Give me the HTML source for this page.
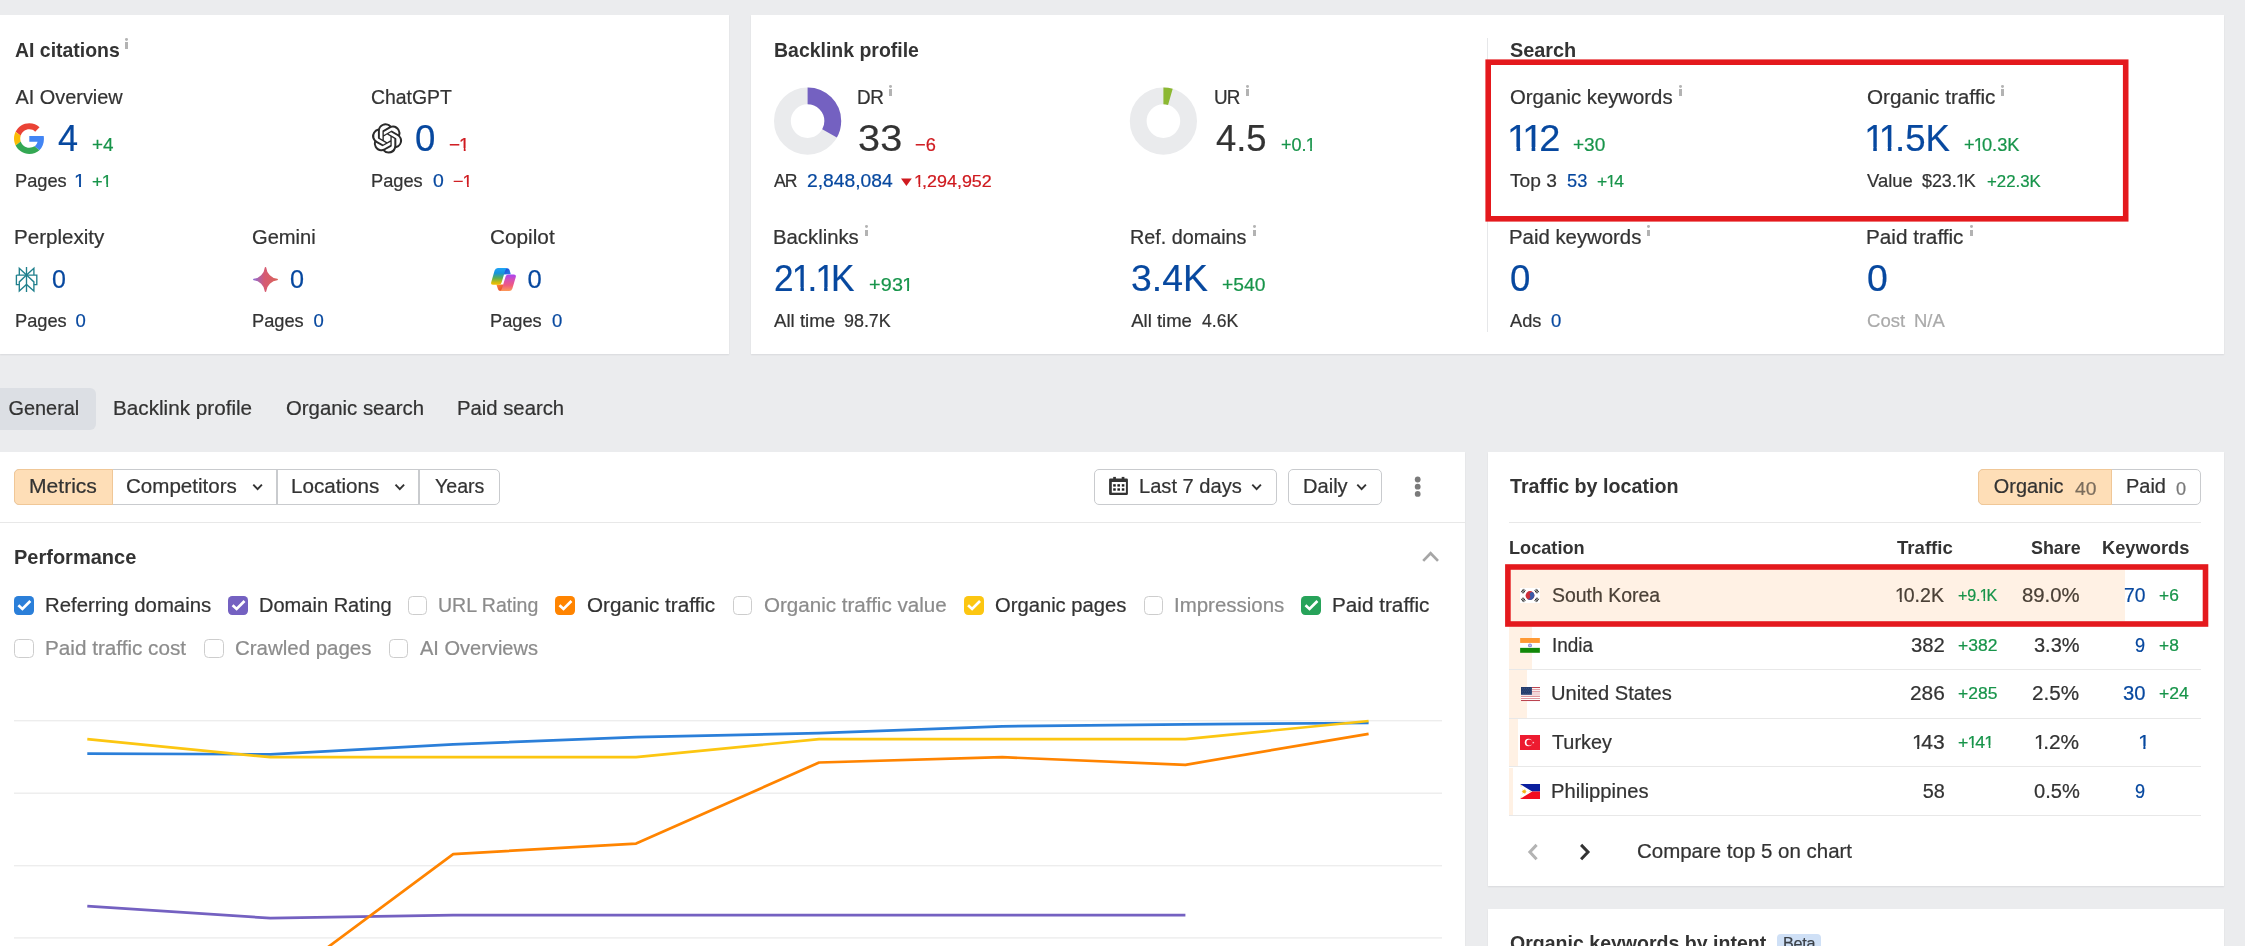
<!DOCTYPE html>
<html lang="en"><head><meta charset="utf-8"><title>Site Explorer overview</title>
<style>
html,body{margin:0;padding:0}
html{background:#ebecee}
body{width:2245px;height:946px;overflow:hidden;background:#ebecee;position:relative;font-family:"Liberation Sans",sans-serif;color:#333}
.abs,.t,.card,.cb,.ub,.ii,.hl,.sep,.bar,.redbox,.btn{position:absolute;box-sizing:border-box}
.t{line-height:1;white-space:nowrap;transform-origin:0 0;-webkit-text-stroke:0.22px currentColor}
.o{display:inline-block;margin-left:-0.05em;margin-right:-0.11em}
.o1{clip-path:polygon(0 -5px,100% -5px,100% 13px,0.345em 13px,0.345em 21px,0.248em 21px,0.248em 13px,0 13px)}
.o2{clip-path:polygon(0 -5px,100% -5px,100% 12px,0.345em 12px,0.345em 20px,0.248em 20px,0.248em 12px,0 12px)}
.o3{clip-path:polygon(0 -5px,100% -5px,100% 11px,0.345em 11px,0.345em 19px,0.248em 19px,0.248em 11px,0 11px)}
.o4{clip-path:polygon(0 -5px,100% -5px,100% 27px,0.345em 27px,0.345em 36px,0.248em 36px,0.248em 27px,0 27px)}
.o5{clip-path:polygon(0 -5px,100% -5px,100% 18px,0.345em 18px,0.345em 26px,0.248em 26px,0.248em 18px,0 18px)}
.card{background:#fff;box-shadow:0 1px 1.5px rgba(20,25,35,.085)}
.redbox{border:5.6px solid #e4191d}
.cb{width:20px;height:19.2px;border-radius:4.2px}
.ub{width:19.6px;height:19.2px;border-radius:4.5px;border:1.3px solid #cdcdcd;background:#fff;margin-left:-0.3px;margin-top:-0.2px}
.ii{width:2.9px;height:6.9px;background:#b3b3b3}
.ii:before{content:"";position:absolute;left:-0.1px;top:-4.15px;width:3.1px;height:3px;border-radius:50%;background:#b3b3b3}
.sep{height:1.2px;background:#e8e8e8}
.bar{background:#fff1e4}
.btn{border:1.3px solid #c9cbce;border-radius:5px;background:#fff}
svg{position:absolute;overflow:visible}
</style></head><body>

<!-- ===== top cards ===== -->
<div class="card" style="left:0;top:15px;width:729px;height:338.6px"></div>
<div class="card" style="left:751px;top:15px;width:1473px;height:338.6px"></div>
<div class="abs" style="left:1486.7px;top:38px;width:1.2px;height:294px;background:#e6e7e9"></div>

<!-- info icons -->
<div class="ii" style="left:125.3px;top:42.2px"></div>
<div class="ii" style="left:889.1px;top:89.1px"></div>
<div class="ii" style="left:1246.3px;top:89.1px"></div>
<div class="ii" style="left:1679.1px;top:89.1px"></div>
<div class="ii" style="left:2001.1px;top:89.1px"></div>
<div class="ii" style="left:865.1px;top:229.5px"></div>
<div class="ii" style="left:1253.3px;top:229.5px"></div>
<div class="ii" style="left:1647.1px;top:229.5px"></div>
<div class="ii" style="left:1970.2px;top:229.5px"></div>

<!--ICONS-->

<!-- ===== tabs ===== -->
<div class="abs" style="left:0;top:388px;width:96px;height:41.6px;background:#dcdfe4;border-radius:0 6px 6px 0"></div>

<!-- ===== chart card ===== -->
<div class="card" style="left:0;top:451.6px;width:1465px;height:520px"></div>
<div class="btn" style="left:14.2px;top:468.9px;width:485.5px;height:35.8px"></div>
<div class="abs" style="left:14.2px;top:468.9px;width:99px;height:35.8px;background:#fedeb7;border:1.3px solid #f0c797;border-radius:5px 0 0 5px"></div>
<div class="abs" style="left:276.3px;top:469px;width:1.3px;height:35.6px;background:#c9cbce"></div>
<div class="abs" style="left:418.4px;top:469px;width:1.3px;height:35.6px;background:#c9cbce"></div>
<div class="btn" style="left:1094.2px;top:468.9px;width:182.7px;height:35.8px"></div>
<div class="btn" style="left:1288px;top:468.9px;width:93.6px;height:35.8px"></div>
<div class="sep" style="left:0;top:522px;width:1465px"></div>

<!-- checkboxes row 1 -->
<div class="cb" style="left:14.2px;top:595.9px;background:#2b7fd9"></div>
<div class="cb" style="left:228.2px;top:595.9px;background:#7461c1"></div>
<div class="ub" style="left:408px;top:596.2px"></div>
<div class="cb" style="left:555.2px;top:595.9px;background:#ff8400"></div>
<div class="ub" style="left:733.2px;top:596.2px"></div>
<div class="cb" style="left:963.7px;top:595.9px;background:#fcc611"></div>
<div class="ub" style="left:1144px;top:596.2px"></div>
<div class="cb" style="left:1301.2px;top:595.9px;background:#27a35a"></div>
<!-- row 2 -->
<div class="ub" style="left:14.4px;top:639.2px"></div>
<div class="ub" style="left:204.5px;top:639.2px"></div>
<div class="ub" style="left:389px;top:639.2px"></div>

<!-- ===== right card ===== -->
<div class="card" style="left:1488px;top:451.6px;width:736px;height:434.4px"></div>
<div class="btn" style="left:1978.1px;top:468.9px;width:222.8px;height:35.8px"></div>
<div class="abs" style="left:1978.1px;top:468.9px;width:134px;height:35.8px;background:#fedeb7;border:1.3px solid #f0c797;border-radius:5px 0 0 5px"></div>
<div class="sep" style="left:1509.2px;top:522px;width:691.6px"></div>

<!-- rows -->
<div class="bar" style="left:1510px;top:570px;width:614.8px;height:51.2px"></div>
<div class="bar" style="left:1509.2px;top:627px;width:22.6px;height:42.2px"></div>
<div class="bar" style="left:1509.2px;top:670.2px;width:17.4px;height:47.8px"></div>
<div class="bar" style="left:1509.2px;top:719.2px;width:8.7px;height:47px"></div>
<div class="bar" style="left:1509.2px;top:767.5px;width:3.8px;height:47.2px"></div>
<div class="sep" style="left:1509.2px;top:669px;width:691.6px"></div>
<div class="sep" style="left:1509.2px;top:718px;width:691.6px"></div>
<div class="sep" style="left:1509.2px;top:766.3px;width:691.6px"></div>
<div class="sep" style="left:1509.2px;top:814.7px;width:691.6px"></div>

<!-- next card -->
<div class="card" style="left:1488px;top:908.8px;width:736px;height:80px"></div>
<div class="abs" style="left:1777.2px;top:934.3px;width:43.8px;height:30px;background:#cfe0f6;border-radius:4px"></div>

<svg style="left:13.8px;top:122.8px" width="30.6" height="31.2" viewBox="0 0 48 48">
<path fill="#EA4335" d="M24 9.5c3.54 0 6.71 1.22 9.21 3.6l6.85-6.85C35.9 2.38 30.47 0 24 0 14.62 0 6.51 5.38 2.56 13.22l7.98 6.19C12.43 13.72 17.74 9.5 24 9.5z"/>
<path fill="#4285F4" d="M46.98 24.55c0-1.57-.15-3.09-.38-4.55H24v9.02h12.94c-.58 2.96-2.26 5.48-4.78 7.18l7.73 6c4.51-4.18 7.09-10.36 7.09-17.65z"/>
<path fill="#FBBC05" d="M10.53 28.59c-.48-1.45-.76-2.99-.76-4.59s.27-3.14.76-4.59l-7.98-6.19C.92 16.46 0 20.12 0 24c0 3.88.92 7.54 2.56 10.78l7.97-6.19z"/>
<path fill="#34A853" d="M24 48c6.48 0 11.93-2.13 15.89-5.81l-7.73-6c-2.15 1.45-4.92 2.3-8.16 2.3-6.26 0-11.57-4.22-13.47-9.91l-7.98 6.19C6.51 42.62 14.62 48 24 48z"/>
</svg>
<svg style="left:371.9px;top:122.9px" width="30.2" height="30.8" viewBox="0 0 24 24"><path fill="#2b2b2b" d="M22.2819 9.8211a5.9847 5.9847 0 0 0-.5157-4.9108 6.0462 6.0462 0 0 0-6.5098-2.9A6.0651 6.0651 0 0 0 4.9807 4.1818a5.9847 5.9847 0 0 0-3.9977 2.9 6.0462 6.0462 0 0 0 .7427 7.0966 5.98 5.98 0 0 0 .511 4.9107 6.051 6.051 0 0 0 6.5146 2.9001A5.9847 5.9847 0 0 0 13.2599 24a6.0557 6.0557 0 0 0 5.7718-4.2058 5.9894 5.9894 0 0 0 3.9977-2.9001 6.0557 6.0557 0 0 0-.7475-7.0729zm-9.022 12.6081a4.4755 4.4755 0 0 1-2.8764-1.0408l.1419-.0804 4.7783-2.7582a.7948.7948 0 0 0 .3927-.6813v-6.7369l2.02 1.1686a.071.071 0 0 1 .038.052v5.5826a4.504 4.504 0 0 1-4.4945 4.4944zm-9.6607-4.1254a4.4708 4.4708 0 0 1-.5346-3.0137l.142.0852 4.783 2.7582a.7712.7712 0 0 0 .7806 0l5.8428-3.3685v2.3324a.0804.0804 0 0 1-.0332.0615L9.74 19.9502a4.4992 4.4992 0 0 1-6.1408-1.6464zM2.3408 7.8956a4.485 4.485 0 0 1 2.3655-1.9728V11.6a.7664.7664 0 0 0 .3879.6765l5.8144 3.3543-2.0201 1.1685a.0757.0757 0 0 1-.071 0l-4.8303-2.7865A4.504 4.504 0 0 1 2.3408 7.872zm16.5963 3.8558L13.1038 8.364 15.1192 7.2a.0757.0757 0 0 1 .071 0l4.8303 2.7913a4.4944 4.4944 0 0 1-.6765 8.1042v-5.6772a.79.79 0 0 0-.407-.667zm2.0107-3.0231l-.142-.0852-4.7735-2.7818a.7759.7759 0 0 0-.7854 0L9.409 9.2297V6.8974a.0662.0662 0 0 1 .0284-.0615l4.8303-2.7866a4.4992 4.4992 0 0 1 6.6802 4.66zM8.3065 12.863l-2.02-1.1638a.0804.0804 0 0 1-.038-.0567V6.0742a4.4992 4.4992 0 0 1 7.3757-3.4537l-.142.0805L8.704 5.459a.7948.7948 0 0 0-.3927.6813zm1.0976-2.3654l2.602-1.4998 2.6069 1.4998v2.9994l-2.5974 1.4997-2.6067-1.4997Z"/></svg>
<svg style="left:0;top:0" width="2245" height="946"><g fill="none" stroke="#20808d" stroke-width="1.35" stroke-linejoin="miter">
<path d="M26.5 267V292"/>
<path d="M16.4 275.1H36.8V284.6H33.9"/>
<path d="M16.4 275.1V284.6H19.3"/>
<path d="M19.3 275.1V268.3L26.5 275.1L33.9 268.3V275.1"/>
<path d="M26.5 275.1L19.3 281.9V291L26.5 284.4L33.9 291V281.9L26.5 275.1"/>
</g></svg>
<svg style="left:253px;top:267px" width="25" height="25" viewBox="0 0 25 25"><defs><linearGradient id="gm" x1="0" y1="0" x2="1" y2="0"><stop offset="0" stop-color="#8f6ad0"/><stop offset="0.45" stop-color="#d65a72"/><stop offset="1" stop-color="#d9635a"/></linearGradient></defs>
<path fill="url(#gm)" stroke="url(#gm)" stroke-width="1.5" stroke-linejoin="round" d="M12.5 0.8C12.9 6.6 18.4 12.1 24.2 12.5C18.4 12.9 12.9 18.4 12.5 24.2C12.1 18.4 6.6 12.9 0.8 12.5C6.6 12.1 12.1 6.6 12.5 0.8Z"/></svg>
<svg style="left:491px;top:267.8px" width="25" height="23.2" viewBox="0 0 25 23.2"><defs>
<linearGradient id="c1" x1="0" y1="0" x2="0" y2="1"><stop offset="0" stop-color="#1fa4f5"/><stop offset="0.3" stop-color="#1593dd"/><stop offset="0.6" stop-color="#5cae52"/><stop offset="0.85" stop-color="#cdbb10"/><stop offset="1" stop-color="#f7bf00"/></linearGradient>
<linearGradient id="c2" x1="0" y1="0" x2="0" y2="1"><stop offset="0" stop-color="#a843f5"/><stop offset="0.35" stop-color="#d851b0"/><stop offset="0.65" stop-color="#f05a80"/><stop offset="1" stop-color="#fc9a55"/></linearGradient>
<linearGradient id="c3" x1="0" y1="0" x2="1" y2="1"><stop offset="0" stop-color="#ff8a3a"/><stop offset="1" stop-color="#e23a2a"/></linearGradient>
<linearGradient id="c4" x1="0" y1="0" x2="1" y2="1"><stop offset="0" stop-color="#1b3fd8"/><stop offset="1" stop-color="#2a86e8"/></linearGradient></defs>
<path fill="url(#c4)" d="M13.5 0.3H16.2Q18 0.3 18.6 2.2L19.8 6.2L12.3 6.6Z"/>
<path fill="url(#c3)" d="M5.4 16.6H12.7L11.2 23H9.3Q7.5 23 7 21.2Z"/>
<path fill="url(#c1)" d="M6.8 0.1H16.4Q14.9 0.6 14.2 2.6L10.6 14.6Q9.9 16.8 7.7 16.8H2Q-0.4 16.8 0.2 14.3L3.6 2.6Q4.4 0.1 6.8 0.1Z"/>
<path fill="url(#c2)" d="M18.2 23.1H8.7Q10.3 22.6 11 20.6L14.6 8.6Q15.3 6.4 17.5 6.4H23Q25.4 6.4 24.8 8.9L21.4 20.6Q20.6 23.1 18.2 23.1Z"/>
</svg>
<svg style="left:0;top:0" width="2245" height="946">
<rect x="1488.2" y="62.2" width="637.5" height="156.6" fill="none" stroke="#e4191d" stroke-width="5.6"/>
<rect x="1507.9" y="567" width="697.6" height="57" fill="none" stroke="#e4191d" stroke-width="5.6"/>
<circle cx="807.6" cy="121.1" r="25.2" fill="none" stroke="#eaebed" stroke-width="16.8"/>
<circle cx="807.6" cy="121.1" r="25.2" fill="none" stroke="#7461c1" stroke-width="16.8" stroke-dasharray="52.25 158.34" transform="rotate(-90 807.6 121.1)"/>
<circle cx="1163.4" cy="121.1" r="25.2" fill="none" stroke="#eaebed" stroke-width="16.8"/>
<circle cx="1163.4" cy="121.1" r="25.2" fill="none" stroke="#8cb832" stroke-width="16.8" stroke-dasharray="7.13 158.34" transform="rotate(-90 1163.4 121.1)"/>
<path d="M901 178.4H911.8L906.4 185.9Z" fill="#cf1a1f"/>
<path d="M253.3 484.6L257.6 489.2L261.9 484.6" fill="none" stroke="#333" stroke-width="1.9"/>
<path d="M395.5 484.6L399.8 489.2L404.1 484.6" fill="none" stroke="#333" stroke-width="1.9"/>
<path d="M1252.3 484.6L1256.6 489.2L1260.9 484.6" fill="none" stroke="#333" stroke-width="1.9"/>
<path d="M1357.3 484.6L1361.6 489.2L1365.9 484.6" fill="none" stroke="#333" stroke-width="1.9"/>
<path d="M1423.2 560.9L1430.6 553.3L1438 560.9" fill="none" stroke="#a6a6a6" stroke-width="2.7"/>
<circle cx="1417.7" cy="479.5" r="2.9" fill="#7a7a7a"/>
<circle cx="1417.7" cy="486.7" r="2.9" fill="#7a7a7a"/>
<circle cx="1417.7" cy="493.9" r="2.9" fill="#7a7a7a"/>
<g fill="#333"><rect x="1109.1" y="478.5" width="18.8" height="16.5" rx="1.2"/><rect x="1113.2" y="476.9" width="2.7" height="3"/><rect x="1121.7" y="476.9" width="2.7" height="3"/></g>
<rect x="1111.8" y="482" width="14.1" height="10.7" fill="#fff"/>
<rect x="1113.2" y="484.2" width="2.55" height="2.4" fill="#222"/>
<rect x="1113.2" y="488.3" width="2.55" height="2.4" fill="#222"/>
<rect x="1117.4" y="484.2" width="2.55" height="2.4" fill="#222"/>
<rect x="1117.4" y="488.3" width="2.55" height="2.4" fill="#222"/>
<rect x="1121.8" y="484.2" width="2.55" height="2.4" fill="#222"/>
<rect x="1121.8" y="488.3" width="2.55" height="2.4" fill="#222"/>
<path d="M18.38 605.32L22.40 609.00L30.33 600.97" fill="none" stroke="#fff" stroke-width="2.7"/>
<path d="M232.58 605.32L236.60 609.00L244.53 600.97" fill="none" stroke="#fff" stroke-width="2.7"/>
<path d="M559.48 605.32L563.50 609.00L571.43 600.97" fill="none" stroke="#fff" stroke-width="2.7"/>
<path d="M968.08 605.32L972.10 609.00L980.03 600.97" fill="none" stroke="#fff" stroke-width="2.7"/>
<path d="M1305.48 605.32L1309.50 609.00L1317.43 600.97" fill="none" stroke="#fff" stroke-width="2.7"/>
<path d="M1536.6 844.9L1529.9 852L1536.6 859.2" fill="none" stroke="#b3b3b3" stroke-width="3"/>
<path d="M1581.1 844.9L1588 852L1581.1 859.2" fill="none" stroke="#333" stroke-width="3"/>
<rect x="14" y="720.0" width="1428" height="1.4" fill="#ededed"/>
<rect x="14" y="792.5" width="1428" height="1.4" fill="#ededed"/>
<rect x="14" y="865.0" width="1428" height="1.4" fill="#ededed"/>
<rect x="14" y="937.2" width="1428" height="1.4" fill="#ededed"/>
<polyline points="87.3,906.2 270.3,918.1 453.2,915.1 636.1,915.1 819.1,915.1 1002.3,915.1 1185.4,915.1" fill="none" stroke="#7461c1" stroke-width="2.7" stroke-linejoin="round"/>
<polyline points="87.3,1010.0 270.3,990.0 453.2,854.1 636.1,843.6 819.1,762.5 1002.3,757.2 1185.4,764.8 1368.6,733.8" fill="none" stroke="#ff8400" stroke-width="2.7" stroke-linejoin="round"/>
<polyline points="87.3,753.6 270.3,754.3 453.2,744.4 636.1,737.1 819.1,733.2 1002.3,726.3 1185.4,724.3 1368.6,723.0" fill="none" stroke="#2b7fd9" stroke-width="2.7" stroke-linejoin="round"/>
<polyline points="87.3,739.1 270.3,757.2 453.2,757.2 636.1,757.2 819.1,739.1 1002.3,739.1 1185.4,739.1 1368.6,721.0" fill="none" stroke="#fcc611" stroke-width="2.7" stroke-linejoin="round"/>
</svg>
<svg style="left:1520px;top:588.1px" width="20" height="15" viewBox="0 0 20 15"><rect width="20" height="15" fill="#fff"/>
<circle cx="10" cy="7.5" r="4.4" fill="#cd2e3a"/><g transform="translate(10 7.5) rotate(-33.7)"><path d="M-4.4 0A4.4 4.4 0 0 0 4.4 0A2.2 2.2 0 0 0 0 0A2.2 2.2 0 0 1 -4.4 0Z" fill="#3a5aa8"/></g>
<g stroke="#1a1a1a" stroke-width="0.9"><path d="M1.2 4.1L3.6 0.9M2.1 4.8L4.5 1.6M3 5.5L5.4 2.3M14.6 2.3L17 5.5M15.5 1.6L17.9 4.8M16.4 0.9L18.8 4.1M1.2 10.9L3.6 14.1M2.1 10.2L4.5 13.4M3 9.5L5.4 12.7M14.6 12.7L17 9.5M15.5 13.4L17.9 10.2M16.4 14.1L18.8 10.9"/></g></svg>
<svg style="left:1520px;top:638.1px" width="20" height="14.8" viewBox="0 0 20 15"><rect width="20" height="15" fill="#fff"/><rect width="20" height="5" fill="#ff9933"/><rect y="10" width="20" height="5" fill="#128807"/><circle cx="10" cy="7.5" r="2" fill="#8a8ad6"/><circle cx="10" cy="7.5" r="0.9" fill="#c9c9ee"/></svg>
<svg style="left:1521px;top:686.9px" width="19" height="14.2" viewBox="0 0 19 14.2"><rect width="19" height="14.2" fill="#fff"/><rect x="10.9" y="5.4" width="8.1" height="3.2" fill="#f1d5d7"/><rect x="0" y="7.8" width="19" height="0.8" fill="#f1d5d7"/><rect x="10.9" y="0.1" width="8.1" height="0.95" fill="#b5323f"/><rect x="10.9" y="2.2" width="8.1" height="0.95" fill="#dc8f96"/><rect x="10.9" y="4.2" width="8.1" height="0.95" fill="#dc8f96"/><rect x="0" y="9.0" width="19" height="0.95" fill="#dc8f96"/><rect x="0" y="11.1" width="19" height="0.95" fill="#dc8f96"/><rect x="0" y="13.1" width="19" height="0.95" fill="#b5323f"/><rect width="10.9" height="7.8" fill="#213a6b"/><g fill="#5a6d96"><rect x="0.9" y="0.9" width="0.7" height="0.7"/><rect x="2.9" y="0.9" width="0.7" height="0.7"/><rect x="4.9" y="0.9" width="0.7" height="0.7"/><rect x="6.9" y="0.9" width="0.7" height="0.7"/><rect x="8.9" y="0.9" width="0.7" height="0.7"/><rect x="1.8" y="2.7" width="0.7" height="0.7"/><rect x="3.8" y="2.7" width="0.7" height="0.7"/><rect x="5.8" y="2.7" width="0.7" height="0.7"/><rect x="7.8" y="2.7" width="0.7" height="0.7"/><rect x="9.8" y="2.7" width="0.7" height="0.7"/><rect x="0.9" y="4.5" width="0.7" height="0.7"/><rect x="2.9" y="4.5" width="0.7" height="0.7"/><rect x="4.9" y="4.5" width="0.7" height="0.7"/><rect x="6.9" y="4.5" width="0.7" height="0.7"/><rect x="8.9" y="4.5" width="0.7" height="0.7"/><rect x="1.8" y="6.3" width="0.7" height="0.7"/><rect x="3.8" y="6.3" width="0.7" height="0.7"/><rect x="5.8" y="6.3" width="0.7" height="0.7"/><rect x="7.8" y="6.3" width="0.7" height="0.7"/><rect x="9.8" y="6.3" width="0.7" height="0.7"/></g></svg>
<svg style="left:1520px;top:735px" width="20" height="15" viewBox="0 0 20 15"><rect width="20" height="15" fill="#ed1b30"/><circle cx="8.5" cy="7.6" r="3.75" fill="#fff"/><circle cx="9.45" cy="7.6" r="3" fill="#ed1b30"/><path d="M14.6 7.6L12.5 8.3L13.8 6.5V8.7L12.5 6.9Z" fill="#fff"/></svg>
<svg style="left:1520px;top:784px" width="20" height="15" viewBox="0 0 20 15"><rect width="20" height="7.5" fill="#0b1f9e"/><rect y="7.5" width="20" height="7.5" fill="#f20d1e"/><path d="M0 0L12.2 7.5L0 15Z" fill="#fff"/><circle cx="4.2" cy="7.5" r="1.5" fill="#f2b416"/><path d="M5.42 7.05L6.90 7.50L5.42 7.95Z" fill="#f2b416"/><path d="M5.38 8.05L6.11 9.41L4.75 8.68Z" fill="#f2b416"/><path d="M4.65 8.72L4.20 10.20L3.75 8.72Z" fill="#f2b416"/><path d="M3.65 8.68L2.29 9.41L3.02 8.05Z" fill="#f2b416"/><path d="M2.98 7.95L1.50 7.50L2.98 7.05Z" fill="#f2b416"/><path d="M3.02 6.95L2.29 5.59L3.65 6.32Z" fill="#f2b416"/><path d="M3.75 6.28L4.20 4.80L4.65 6.28Z" fill="#f2b416"/><path d="M4.75 6.32L6.11 5.59L5.38 6.95Z" fill="#f2b416"/><circle cx="1.1" cy="1.9" r="0.55" fill="#f2c84a"/><circle cx="1.1" cy="13.1" r="0.55" fill="#f2c84a"/><circle cx="10" cy="7.5" r="0.55" fill="#f2c84a"/></svg>

<div class="abs" style="left:0;top:0;width:2245px;height:946px;will-change:transform">
<span class="t" style="left:15.00px;top:41px;font-size:19.9px;color:#333333;font-weight:700;-webkit-text-stroke:0;transform:scaleX(0.9772);">AI citations</span>
<span class="t" style="left:15.50px;top:88px;font-size:19.9px;color:#333333;">AI Overview</span>
<span class="t" style="left:58.40px;top:120px;font-size:37.0px;color:#07489f;transform:scaleX(0.9750);">4</span>
<span class="t" style="left:92.30px;top:136px;font-size:18.5px;color:#17944a;transform:scaleX(1.0190);">+4</span>
<span class="t" style="left:14.51px;top:172px;font-size:18.5px;color:#333333;transform:scaleX(0.9862);">Pages</span>
<span class="t" style="left:75.38px;top:172px;font-size:18.5px;color:#07489f;transform:scaleX(1.1000);"><span class="o o2">1</span></span>
<span class="t" style="left:91.80px;top:173px;font-size:17.05px;color:#17944a;letter-spacing:0.073px;transform:scaleX(1.0700);">+<span class="o o3">1</span></span>
<span class="t" style="left:371.22px;top:88px;font-size:19.9px;color:#333333;transform:scaleX(0.9761);">ChatGPT</span>
<span class="t" style="left:414.71px;top:120px;font-size:37.0px;color:#07489f;transform:scaleX(0.9895);">0</span>
<span class="t" style="left:449.30px;top:136px;font-size:18.5px;color:#cf1a1f;transform:scaleX(1.0205);">−<span class="o o2">1</span></span>
<span class="t" style="left:371.21px;top:172px;font-size:18.5px;color:#333333;transform:scaleX(0.9862);">Pages</span>
<span class="t" style="left:432.80px;top:172px;font-size:18.5px;color:#07489f;transform:scaleX(1.0500);">0</span>
<span class="t" style="left:452.90px;top:173px;font-size:17.05px;color:#cf1a1f;transform:scaleX(1.0551);">−<span class="o o3">1</span></span>
<span class="t" style="left:14.47px;top:228px;font-size:19.9px;color:#333333;transform:scaleX(1.0337);">Perplexity</span>
<span class="t" style="left:51.52px;top:267px;font-size:25.6px;color:#07489f;transform:scaleX(0.9769);">0</span>
<span class="t" style="left:14.51px;top:312px;font-size:18.5px;color:#333333;transform:scaleX(0.9862);">Pages</span>
<span class="t" style="left:75.60px;top:312px;font-size:18.5px;color:#07489f;">0</span>
<span class="t" style="left:252.19px;top:228px;font-size:19.9px;color:#333333;transform:scaleX(1.0116);">Gemini</span>
<span class="t" style="left:289.52px;top:267px;font-size:25.6px;color:#07489f;transform:scaleX(0.9846);">0</span>
<span class="t" style="left:252.21px;top:312px;font-size:18.5px;color:#333333;transform:scaleX(0.9862);">Pages</span>
<span class="t" style="left:313.50px;top:312px;font-size:18.5px;color:#07489f;">0</span>
<span class="t" style="left:489.86px;top:228px;font-size:19.9px;color:#333333;transform:scaleX(1.0442);">Copilot</span>
<span class="t" style="left:527.40px;top:267px;font-size:25.6px;color:#07489f;">0</span>
<span class="t" style="left:490.01px;top:312px;font-size:18.5px;color:#333333;transform:scaleX(0.9862);">Pages</span>
<span class="t" style="left:552.00px;top:312px;font-size:18.5px;color:#07489f;">0</span>
<span class="t" style="left:773.52px;top:41px;font-size:19.9px;color:#333333;font-weight:700;-webkit-text-stroke:0;transform:scaleX(0.9785);">Backlink profile</span>
<span class="t" style="left:857.05px;top:88px;font-size:19.9px;color:#333333;letter-spacing:-0.522px;transform:scaleX(0.9500);">DR</span>
<span class="t" style="left:857.73px;top:120px;font-size:37.0px;color:#333333;letter-spacing:0.207px;transform:scaleX(1.0700);">33</span>
<span class="t" style="left:914.90px;top:136px;font-size:18.5px;color:#cf1a1f;transform:scaleX(0.9854);">−6</span>
<span class="t" style="left:774.00px;top:172px;font-size:18.5px;color:#333333;letter-spacing:-1.129px;transform:scaleX(0.9500);">AR</span>
<span class="t" style="left:806.60px;top:172px;font-size:18.5px;color:#07489f;transform:scaleX(1.0413);">2,848,084</span>
<span class="t" style="left:914.77px;top:173px;font-size:17.05px;color:#cf1a1f;transform:scaleX(1.0504);"><span class="o o3">1</span>,294,952</span>
<span class="t" style="left:1214.35px;top:88px;font-size:19.9px;color:#333333;letter-spacing:-0.838px;transform:scaleX(0.9500);">UR</span>
<span class="t" style="left:1216.00px;top:120px;font-size:37.0px;color:#333333;transform:scaleX(0.9831);">4.5</span>
<span class="t" style="left:1280.90px;top:136px;font-size:18.5px;color:#17944a;transform:scaleX(0.9748);">+0.<span class="o o2">1</span></span>
<span class="t" style="left:772.98px;top:228px;font-size:19.9px;color:#333333;transform:scaleX(1.0209);">Backlinks</span>
<span class="t" style="left:774.05px;top:260px;font-size:37.0px;color:#07489f;letter-spacing:-0.043px;transform:scaleX(0.9500);">2<span class="o o4">1</span>.<span class="o o4">1</span>K</span>
<span class="t" style="left:868.80px;top:276px;font-size:18.5px;color:#17944a;letter-spacing:0.181px;transform:scaleX(1.0700);">+93<span class="o o2">1</span></span>
<span class="t" style="left:774.00px;top:312px;font-size:18.5px;color:#333333;transform:scaleX(1.0089);">All time</span>
<span class="t" style="left:844.40px;top:312px;font-size:18.5px;color:#333333;transform:scaleX(0.9672);">98.7K</span>
<span class="t" style="left:1130.21px;top:228px;font-size:19.9px;color:#333333;transform:scaleX(0.9936);">Ref. domains</span>
<span class="t" style="left:1130.69px;top:260px;font-size:37.0px;color:#07489f;transform:scaleX(1.0088);">3.4K</span>
<span class="t" style="left:1222.30px;top:276px;font-size:18.5px;color:#17944a;transform:scaleX(1.0415);">+540</span>
<span class="t" style="left:1131.20px;top:312px;font-size:18.5px;color:#333333;">All time</span>
<span class="t" style="left:1201.60px;top:312px;font-size:18.5px;color:#333333;transform:scaleX(0.9531);">4.6K</span>
<span class="t" style="left:1509.90px;top:41px;font-size:19.9px;color:#333333;font-weight:700;-webkit-text-stroke:0;">Search</span>
<span class="t" style="left:1509.90px;top:88px;font-size:19.9px;color:#333333;transform:scaleX(1.0211);">Organic keywords</span>
<span class="t" style="left:1508.64px;top:120px;font-size:37.0px;color:#07489f;transform:scaleX(1.0278);"><span class="o o4">1</span><span class="o o4">1</span>2</span>
<span class="t" style="left:1573.20px;top:136px;font-size:18.5px;color:#17944a;transform:scaleX(1.0292);">+30</span>
<span class="t" style="left:1509.90px;top:172px;font-size:18.5px;color:#333333;transform:scaleX(1.0363);">Top 3</span>
<span class="t" style="left:1566.50px;top:172px;font-size:18.5px;color:#07489f;transform:scaleX(0.9858);">53</span>
<span class="t" style="left:1597.00px;top:173px;font-size:17.05px;color:#17944a;transform:scaleX(1.0276);">+<span class="o o3">1</span>4</span>
<span class="t" style="left:1867.10px;top:88px;font-size:19.9px;color:#333333;transform:scaleX(1.0405);">Organic traffic</span>
<span class="t" style="left:1865.91px;top:120px;font-size:37.0px;color:#07489f;transform:scaleX(0.9897);"><span class="o o4">1</span><span class="o o4">1</span>.5K</span>
<span class="t" style="left:1963.90px;top:136px;font-size:18.5px;color:#17944a;transform:scaleX(0.9868);">+<span class="o o2">1</span>0.3K</span>
<span class="t" style="left:1867.10px;top:172px;font-size:18.5px;color:#333333;transform:scaleX(0.9944);">Value</span>
<span class="t" style="left:1922.00px;top:172px;font-size:18.5px;color:#333333;transform:scaleX(0.9656);">$23.<span class="o o2">1</span>K</span>
<span class="t" style="left:1986.80px;top:173px;font-size:17.05px;color:#17944a;transform:scaleX(0.9874);">+22.3K</span>
<span class="t" style="left:1508.88px;top:228px;font-size:19.9px;color:#333333;transform:scaleX(1.0233);">Paid keywords</span>
<span class="t" style="left:1510.01px;top:260px;font-size:37.0px;color:#07489f;transform:scaleX(0.9895);">0</span>
<span class="t" style="left:1509.90px;top:312px;font-size:18.5px;color:#333333;transform:scaleX(0.9833);">Ads</span>
<span class="t" style="left:1551.00px;top:312px;font-size:18.5px;color:#07489f;">0</span>
<span class="t" style="left:1866.06px;top:228px;font-size:19.9px;color:#333333;transform:scaleX(1.0414);">Paid traffic</span>
<span class="t" style="left:1867.29px;top:260px;font-size:37.0px;color:#07489f;transform:scaleX(1.0105);">0</span>
<span class="t" style="left:1867.10px;top:312px;font-size:18.5px;color:#aaaaaa;">Cost</span>
<span class="t" style="left:1913.50px;top:312px;font-size:18.5px;color:#aaaaaa;transform:scaleX(0.9967);">N/A</span>
<span class="t" style="left:8.50px;top:399px;font-size:19.9px;color:#333333;">General</span>
<span class="t" style="left:112.96px;top:399px;font-size:19.9px;color:#333333;transform:scaleX(1.0399);">Backlink profile</span>
<span class="t" style="left:286.40px;top:399px;font-size:19.9px;color:#333333;transform:scaleX(1.0231);">Organic search</span>
<span class="t" style="left:456.98px;top:399px;font-size:19.9px;color:#333333;transform:scaleX(1.0197);">Paid search</span>
<span class="t" style="left:29.34px;top:477px;font-size:19.9px;color:#333333;transform:scaleX(1.0595);">Metrics</span>
<span class="t" style="left:126.17px;top:477px;font-size:19.9px;color:#333333;transform:scaleX(1.0331);">Competitors</span>
<span class="t" style="left:290.76px;top:477px;font-size:19.9px;color:#333333;transform:scaleX(1.0368);">Locations</span>
<span class="t" style="left:434.50px;top:477px;font-size:19.9px;color:#333333;transform:scaleX(0.9843);">Years</span>
<span class="t" style="left:1139.09px;top:477px;font-size:19.9px;color:#333333;transform:scaleX(1.0101);">Last 7 days</span>
<span class="t" style="left:1302.69px;top:477px;font-size:19.9px;color:#333333;transform:scaleX(1.0101);">Daily</span>
<span class="t" style="left:14.49px;top:548px;font-size:19.9px;color:#333333;font-weight:700;-webkit-text-stroke:0;transform:scaleX(1.0054);">Performance</span>
<span class="t" style="left:45.08px;top:596px;font-size:19.9px;color:#333333;transform:scaleX(1.0225);">Referring domains</span>
<span class="t" style="left:258.89px;top:596px;font-size:19.9px;color:#333333;transform:scaleX(1.0077);">Domain Rating</span>
<span class="t" style="left:438.02px;top:596px;font-size:19.9px;color:#8c8c8c;transform:scaleX(0.9826);">URL Rating</span>
<span class="t" style="left:586.90px;top:596px;font-size:19.9px;color:#333333;transform:scaleX(1.0381);">Organic traffic</span>
<span class="t" style="left:764.00px;top:596px;font-size:19.9px;color:#8c8c8c;transform:scaleX(1.0348);">Organic traffic value</span>
<span class="t" style="left:995.00px;top:596px;font-size:19.9px;color:#333333;transform:scaleX(1.0153);">Organic pages</span>
<span class="t" style="left:1173.97px;top:596px;font-size:19.9px;color:#8c8c8c;transform:scaleX(1.0284);">Impressions</span>
<span class="t" style="left:1331.86px;top:596px;font-size:19.9px;color:#333333;transform:scaleX(1.0414);">Paid traffic</span>
<span class="t" style="left:45.06px;top:639px;font-size:19.9px;color:#8c8c8c;transform:scaleX(1.0401);">Paid traffic cost</span>
<span class="t" style="left:234.67px;top:639px;font-size:19.9px;color:#8c8c8c;transform:scaleX(1.0286);">Crawled pages</span>
<span class="t" style="left:420.30px;top:639px;font-size:19.9px;color:#8c8c8c;transform:scaleX(1.0067);">AI Overviews</span>
<span class="t" style="left:1510.40px;top:477px;font-size:19.9px;color:#333333;font-weight:700;-webkit-text-stroke:0;transform:scaleX(0.9902);">Traffic by location</span>
<span class="t" style="left:1993.80px;top:477px;font-size:19.9px;color:#333333;">Organic</span>
<span class="t" style="left:2075.20px;top:480px;font-size:18.5px;color:#7a6c5c;transform:scaleX(1.0400);">40</span>
<span class="t" style="left:2125.50px;top:477px;font-size:19.9px;color:#333333;transform:scaleX(1.0040);">Paid</span>
<span class="t" style="left:2175.70px;top:480px;font-size:18.5px;color:#777777;transform:scaleX(0.9800);">0</span>
<span class="t" style="left:1509.02px;top:539px;font-size:18.5px;color:#333333;font-weight:700;-webkit-text-stroke:0;transform:scaleX(0.9805);">Location</span>
<span class="t" style="left:1897.00px;top:539px;font-size:18.5px;color:#333333;font-weight:700;-webkit-text-stroke:0;transform:scaleX(1.0049);">Traffic</span>
<span class="t" style="left:2030.50px;top:539px;font-size:18.5px;color:#333333;font-weight:700;-webkit-text-stroke:0;transform:scaleX(0.9662);">Share</span>
<span class="t" style="left:2102.31px;top:539px;font-size:18.5px;color:#333333;font-weight:700;-webkit-text-stroke:0;transform:scaleX(0.9882);">Keywords</span>
<span class="t" style="left:1552.30px;top:586px;font-size:19.9px;color:#4a4036;transform:scaleX(0.9774);">South Korea</span>
<span class="t" style="left:1896.10px;top:586px;font-size:19.9px;color:#4a4036;transform:scaleX(0.9813);"><span class="o o1">1</span>0.2K</span>
<span class="t" style="left:1958.20px;top:587px;font-size:17.05px;color:#17944a;letter-spacing:-0.223px;transform:scaleX(0.9500);">+9.<span class="o o3">1</span>K</span>
<span class="t" style="left:2021.70px;top:586px;font-size:19.9px;color:#4a4036;transform:scaleX(1.0213);">89.0%</span>
<span class="t" style="left:2124.33px;top:586px;font-size:19.9px;color:#07489f;transform:scaleX(0.9686);">70</span>
<span class="t" style="left:2158.90px;top:587px;font-size:17.05px;color:#17944a;transform:scaleX(1.0187);">+6</span>
<span class="t" style="left:1552.05px;top:636px;font-size:19.9px;color:#333333;transform:scaleX(0.9519);">India</span>
<span class="t" style="left:1911.00px;top:636px;font-size:19.9px;color:#333333;transform:scaleX(1.0174);">382</span>
<span class="t" style="left:1958.20px;top:637px;font-size:17.05px;color:#17944a;transform:scaleX(1.0267);">+382</span>
<span class="t" style="left:2033.70px;top:636px;font-size:19.9px;color:#333333;transform:scaleX(1.0056);">3.3%</span>
<span class="t" style="left:2135.20px;top:636px;font-size:19.9px;color:#07489f;transform:scaleX(0.9091);">9</span>
<span class="t" style="left:2158.90px;top:637px;font-size:17.05px;color:#17944a;transform:scaleX(1.0187);">+8</span>
<span class="t" style="left:1551.29px;top:684px;font-size:19.9px;color:#333333;transform:scaleX(1.0113);">United States</span>
<span class="t" style="left:1909.95px;top:684px;font-size:19.9px;color:#333333;transform:scaleX(1.0490);">286</span>
<span class="t" style="left:1958.20px;top:685px;font-size:17.05px;color:#17944a;transform:scaleX(1.0267);">+285</span>
<span class="t" style="left:2032.26px;top:684px;font-size:19.9px;color:#333333;transform:scaleX(1.0378);">2.5%</span>
<span class="t" style="left:2123.10px;top:684px;font-size:19.9px;color:#07489f;transform:scaleX(1.0153);">30</span>
<span class="t" style="left:2158.60px;top:685px;font-size:17.05px;color:#17944a;transform:scaleX(1.0346);">+24</span>
<span class="t" style="left:1552.30px;top:733px;font-size:19.9px;color:#333333;transform:scaleX(0.9966);">Turkey</span>
<span class="t" style="left:1913.03px;top:733px;font-size:19.9px;color:#333333;transform:scaleX(1.0578);"><span class="o o1">1</span>43</span>
<span class="t" style="left:1958.20px;top:734px;font-size:17.05px;color:#17944a;transform:scaleX(1.0387);">+<span class="o o3">1</span>4<span class="o o3">1</span></span>
<span class="t" style="left:2035.24px;top:733px;font-size:19.9px;color:#333333;transform:scaleX(1.0457);"><span class="o o1">1</span>.2%</span>
<span class="t" style="left:2139.07px;top:733px;font-size:19.9px;color:#07489f;transform:scaleX(1.1000);"><span class="o o1">1</span></span>
<span class="t" style="left:1551.29px;top:782px;font-size:19.9px;color:#333333;transform:scaleX(1.0141);">Philippines</span>
<span class="t" style="left:1922.70px;top:782px;font-size:19.9px;color:#333333;">58</span>
<span class="t" style="left:2033.50px;top:782px;font-size:19.9px;color:#333333;transform:scaleX(1.0101);">0.5%</span>
<span class="t" style="left:2135.20px;top:782px;font-size:19.9px;color:#07489f;transform:scaleX(0.9091);">9</span>
<span class="t" style="left:1637.37px;top:842px;font-size:19.9px;color:#333333;transform:scaleX(1.0291);">Compare top 5 on chart</span>
<span class="t" style="left:1509.60px;top:934px;font-size:19.9px;color:#333333;font-weight:700;-webkit-text-stroke:0;transform:scaleX(0.9823);">Organic keywords by intent</span>
<span class="t" style="left:1782.85px;top:935px;font-size:17.05px;color:#3a4048;letter-spacing:-0.293px;transform:scaleX(0.9500);">Beta</span>
</div>
</body></html>
